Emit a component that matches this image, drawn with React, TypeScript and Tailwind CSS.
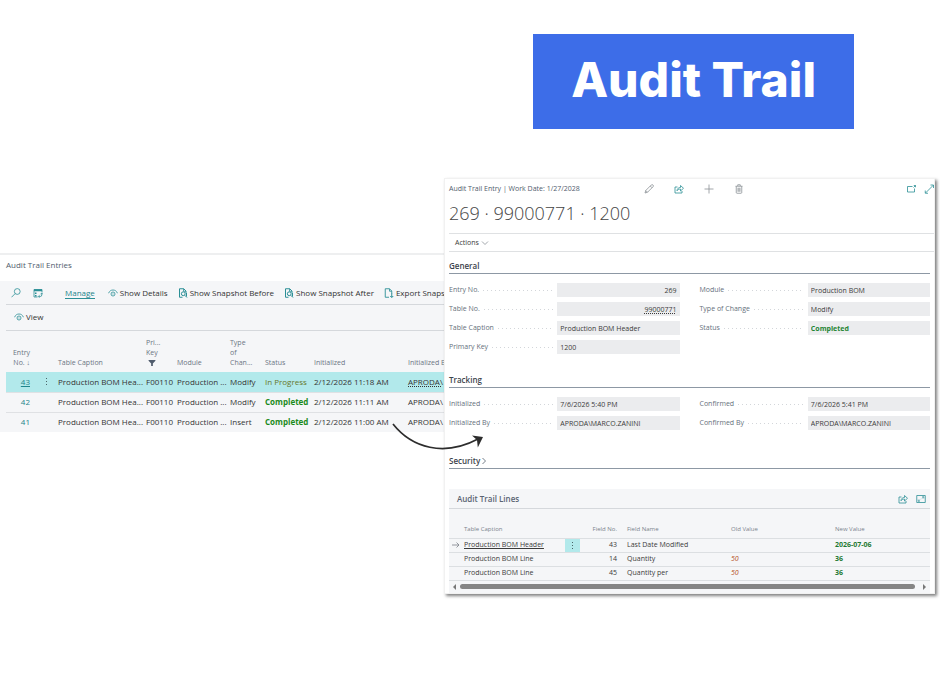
import type { ReactNode } from "react";

interface IconProps {
  className?: string;
}

function Icon({ className = "", children }: IconProps & { children: ReactNode }) {
  return (
    <svg
      viewBox="0 0 20 20"
      fill="none"
      stroke="currentColor"
      strokeWidth="1.6"
      aria-hidden="true"
      className={`size-[10px] shrink-0 ${className}`}
    >
      {children}
    </svg>
  );
}

const SearchIcon = () => (
  <Icon>
    <circle cx="12.5" cy="7" r="5.8" />
    <path d="M8.3 11.2 1 18.5" />
  </Icon>
);

const AnalyzeIcon = () => (
  <Icon>
    <path d="M18 9V3H2v15h7" />
    <path d="M2 4.500h16" strokeWidth="4" />
    <path d="M5.500 9v3M5.500 14v3" strokeWidth="3" />
    <path d="M11 17h3.500a3 3 0 0 0 3-3v-3M13 14.500 10.500 17l2.500 2.500M15 12.500l2.500-2.500 2 2.500" />
  </Icon>
);

const EyeIcon = () => (
  <Icon>
    <path d="M1 10.500C3 6 6 4 10 4s7 2 9 6.500" />
    <circle cx="10" cy="12" r="4" />
    <circle cx="10" cy="12" r="0.600" strokeWidth="1" />
  </Icon>
);

const SnapshotIcon = () => (
  <Icon>
    <path d="M9 18.500H3V1.500h8.500L16 6v4" strokeWidth="2" />
    <path d="M11 1.500V6.500h5" />
    <circle cx="10.500" cy="11.500" r="3.800" strokeWidth="2" />
    <path d="m13.500 14.500 4.500 4.500M17 10v7" strokeWidth="2" />
  </Icon>
);

const ExportIcon = () => (
  <Icon>
    <path d="M10 18.500H2.500V1.500H11L15.500 6v6" strokeWidth="1.800" />
    <path d="M11 1.500V6.500h4.500" />
    <path d="M15.500 11v7.500M12.500 16l3 3 3-3" strokeWidth="2" />
  </Icon>
);

const ShareIcon = () => (
  <Icon>
    <path d="M7 6H2v12h14v-4" />
    <path d="M6 13.500c.5-4.500 3-6.500 7-6.500V3l6 5.500-6 5.500v-3.800c-3 0-5 .8-7 3.300Z" />
  </Icon>
);

const PencilIcon = () => (
  <Icon>
    <path d="m2 18 1.500-5L14.500 2a2 2 0 0 1 3.500 3.500L7 16.500 2 18ZM12.500 4l3.500 3.500M3.500 13l3.500 3.500" />
  </Icon>
);

const PlusIcon = () => (
  <Icon>
    <path d="M10 1v18M1 10h18" />
  </Icon>
);

const TrashIcon = () => (
  <Icon>
    <path d="M3 4.500h14M7.500 4V1.500h5V4M4.500 4.500V17a1.500 1.500 0 0 0 1.500 1.500h8a1.500 1.500 0 0 0 1.500-1.500V4.500M8 7.500v8M10 7.500v8M12 7.500v8" />
  </Icon>
);

const PopoutIcon = () => (
  <Icon>
    <path d="M13 5H3v11h14V9" />
    <path d="m15 7 4-4M15.500 3H19v3.500" />
  </Icon>
);

const ResizeIcon = () => (
  <Icon>
    <path d="M3 18 18.500 2.500M13 2h6v6M2.500 13v5.500H8" />
  </Icon>
);

const FullscreenIcon = () => (
  <Icon>
    <path d="M1.500 3h17v14h-17z" />
    <path d="M11.500 9l4-3.500M12 5.500h3.500V9M8.500 11l-4 3.500M4.500 11v3.500H8" strokeWidth="1.200" />
  </Icon>
);

const FilterIcon = () => (
  <svg viewBox="0 0 8 7" aria-hidden="true" className="h-[6px] w-2">
    <path d="M0 0h8v1L5 4v3H3V4L0 1z" fill="#505c6d" />
  </svg>
);

const MoreDots = () => (
  <svg viewBox="0 0 2 9" aria-hidden="true" className="h-[9px] w-[2px]">
    <path d="M0 1h1v1H0zM0 4h1v1H0zM0 7h1v1H0z" fill="#4a6468" />
  </svg>
);

const entries = [
  { no: 43, type: "Modify", status: "In Progress", initialized: "2/12/2026 11:18 AM" },
  { no: 42, type: "Modify", status: "Completed", initialized: "2/12/2026 11:11 AM" },
  { no: 41, type: "Insert", status: "Completed", initialized: "2/12/2026 11:00 AM" },
];

const lines = [
  { caption: "Production BOM Header", no: 43, name: "Last Date Modified", oldValue: "", newValue: "2026-07-06" },
  { caption: "Production BOM Line", no: 14, name: "Quantity", oldValue: "50", newValue: "36" },
  { caption: "Production BOM Line", no: 45, name: "Quantity per", oldValue: "50", newValue: "36" },
];

function ToolbarButton({ icon, label }: { icon: ReactNode; label: string }) {
  return (
    <button className="flex shrink-0 items-center gap-[2px] whitespace-nowrap text-[#333]">
      <span className="text-[#2b8f96]">{icon}</span>
      {label}
    </button>
  );
}

function EntriesList() {
  return (
    <section className="mt-[75px] min-w-0 overflow-hidden border-t-2 border-[#eeeff0] text-[8px] leading-[10px] text-[#333]">
      <h2 className="flex h-[26px] items-center pb-[6px] pl-[6px] text-[#505c6d]">Audit Trail Entries</h2>
      <div className="bg-[#f5f6f8] pl-[6px]">
        <div className="flex h-6 items-center border-b border-[#d5d8dc] pl-[5px]">
          <button aria-label="Search" className="text-[#2b8f96]">
            <SearchIcon />
          </button>
          <button aria-label="Analyze" className="ml-3 text-[#2b8f96]">
            <AnalyzeIcon />
          </button>
          <span className="ml-[10px] h-[13px] w-px bg-[#cdd1d5]" />
          <button className="ml-3 border-y border-b-[#2b8f96] border-t-transparent text-[#1f858c]">Manage</button>
          <div className="ml-[13px] flex gap-[10px]">
            <ToolbarButton icon={<EyeIcon />} label="Show Details" />
            <ToolbarButton icon={<SnapshotIcon />} label="Show Snapshot Before" />
            <ToolbarButton icon={<SnapshotIcon />} label="Show Snapshot After" />
            <ToolbarButton icon={<ExportIcon />} label="Export Snaps" />
          </div>
        </div>
        <div className="flex h-[26px] items-center border-b border-[#d5d8dc] pb-px pl-2">
          <ToolbarButton icon={<EyeIcon />} label="View" />
        </div>
        <table className="w-full table-fixed border-collapse whitespace-nowrap text-left">
          <colgroup>
            <col className="w-6" />
            <col className="w-7" />
            <col className="w-[88px]" />
            <col className="w-[31px]" />
            <col className="w-[53px]" />
            <col className="w-[35px]" />
            <col className="w-[49px]" />
            <col className="w-[94px]" />
            <col />
          </colgroup>
          <thead className="text-[7px] text-[#6b7583]">
            <tr className="h-[41px] align-bottom [&>th]:p-0 [&>th]:pb-1 [&>th]:font-normal">
              <th className="text-right">
                Entry
                <br />
                No. ↓
              </th>
              <th aria-label="Row menu" />
              <th>Table Caption</th>
              <th>
                Pri...
                <br />
                Key
                <br />
                <span className="flex h-[10px] items-center pl-[2px]">
                  <FilterIcon />
                </span>
              </th>
              <th>Module</th>
              <th>
                Type
                <br />
                of
                <br />
                Chan...
              </th>
              <th>Status</th>
              <th>Initialized</th>
              <th>Initialized By</th>
            </tr>
          </thead>
          <tbody>
            {entries.map((entry, i) => (
              <tr
                key={entry.no}
                className={`h-5 [&>td]:p-0 ${i === 0 ? "bg-[#b2e9eb]" : "border-t border-[#dfe1e4]"}`}
              >
                <td className="text-right">
                  <a href="#entry" className={`text-[#1f858c] ${i === 0 ? "underline" : ""}`}>
                    {entry.no}
                  </a>
                </td>
                <td>
                  {i === 0 && (
                    <button aria-label="More options" className="ml-4 flex">
                      <MoreDots />
                    </button>
                  )}
                </td>
                <td>Production BOM Hea...</td>
                <td>F00110</td>
                <td>Production ...</td>
                <td>{entry.type}</td>
                <td className={entry.status === "Completed" ? "font-bold text-[#1c8a1c]" : "text-[#66782a]"}>
                  {entry.status}
                </td>
                <td>{entry.initialized}</td>
                <td className={i === 0 ? "underline decoration-dotted" : ""}>APRODA\</td>
              </tr>
            ))}
          </tbody>
        </table>
      </div>
    </section>
  );
}

interface FieldProps {
  id: string;
  label: string;
  value: string;
  className?: string;
}

function Field({ id, label, value, className = "" }: FieldProps) {
  return (
    <div className="flex h-[14px] items-center">
      <div className="flex min-w-0 flex-1 items-center gap-1 pr-1">
        <label htmlFor={id} className="whitespace-nowrap text-[#66707c]">
          {label}
        </label>
        <span className="h-px flex-1 bg-[repeating-linear-gradient(90deg,#d3d6da_0_1px,transparent_1px_4px)]" />
      </div>
      <input
        id={id}
        readOnly
        value={value}
        className={`h-full w-[53%] bg-[#ebecee] px-[3px] outline-none ${className}`}
      />
    </div>
  );
}

function SectionTitle({ children }: { children: ReactNode }) {
  return (
    <h3 className="flex h-4 items-center border-b border-[#8d98a4] text-[8px] font-semibold text-[#3c434c]">
      {children}
    </h3>
  );
}

function EntryCard() {
  return (
    <section className="relative mr-[5px] min-w-0 border border-[#f1f1f1] bg-white pl-1 text-[7px] leading-[10px] text-[#3b3b3b] shadow-[2px_2px_3px_0_rgba(0,0,0,0.5)]">
      <header className="flex h-5 items-center text-[#8a9096]">
        <span className="w-[195px] text-[#505c6d]">Audit Trail Entry | Work Date: 1/27/2028</span>
        <div className="flex flex-1 gap-5">
          <button aria-label="Edit">
            <PencilIcon />
          </button>
          <button aria-label="Share" className="text-[#2b8f96]">
            <ShareIcon />
          </button>
          <button aria-label="New">
            <PlusIcon />
          </button>
          <button aria-label="Delete">
            <TrashIcon />
          </button>
        </div>
        <div className="flex gap-2 text-[#2b8f96]">
          <button aria-label="Open in new window">
            <PopoutIcon />
          </button>
          <button aria-label="Expand">
            <ResizeIcon />
          </button>
        </div>
      </header>
      <h2 className="flex h-[34px] items-center pb-[6px] text-[18px] font-light leading-6 text-[#444]">
        269 · 99000771 · 1200
      </h2>
      <div className="flex h-[19px] items-center border-y border-[#dfe1e3] pl-[6px]">
        <button className="flex items-center gap-[2px]">
          Actions
          <svg viewBox="0 0 8 8" fill="none" stroke="#8a9097" aria-hidden="true" className="size-2">
            <path d="m1 2.500 3 3 3-3" strokeWidth="0.800" />
          </svg>
        </button>
      </div>

      <div className="mr-1">
        <div className="mt-[6px]">
          <SectionTitle>General</SectionTitle>
          <div className="mt-[9px] grid grid-cols-2 gap-x-5">
            <div className="flex flex-col gap-[5px]">
              <Field id="entry-no" label="Entry No." value="269" className="text-right" />
              <Field
                id="table-no"
                label="Table No."
                value="99000771"
                className="text-right underline decoration-dotted"
              />
              <Field id="table-caption" label="Table Caption" value="Production BOM Header" />
              <Field id="primary-key" label="Primary Key" value="1200" />
            </div>
            <div className="flex flex-col gap-[5px]">
              <Field id="module" label="Module" value="Production BOM" />
              <Field id="change-type" label="Type of Change" value="Modify" />
              <Field id="status" label="Status" value="Completed" className="font-bold text-[#1f8533]" />
            </div>
          </div>
        </div>

        <div className="mt-[18px]">
          <SectionTitle>Tracking</SectionTitle>
          <div className="mt-[9px] grid grid-cols-2 gap-x-5 gap-y-[5px]">
            <Field id="initialized" label="Initialized" value="7/6/2026 5:40 PM" />
            <Field id="confirmed" label="Confirmed" value="7/6/2026 5:41 PM" />
            <Field id="initialized-by" label="Initialized By" value="APRODA\MARCO.ZANINI" />
            <Field id="confirmed-by" label="Confirmed By" value="APRODA\MARCO.ZANINI" />
          </div>
        </div>

        <div className="mt-[23px]">
          <SectionTitle>
            Security
            <svg viewBox="0 0 6 8" fill="none" stroke="#66707c" aria-hidden="true" className="ml-px h-2 w-[6px]">
              <path d="m1.500 1 3 3-3 3" strokeWidth="0.900" />
            </svg>
          </SectionTitle>
        </div>

        <div className="mt-5 bg-[#f5f6f8]">
          <div className="flex h-5 items-center border-b border-[#d5d8dc] px-2">
            <h3 className="flex-1 text-[8px] font-semibold text-[#5a6472]">Audit Trail Lines</h3>
            <div className="-mr-1 flex gap-2 text-[#2b8f96]">
              <button aria-label="Share lines">
                <ShareIcon />
              </button>
              <button aria-label="Full screen">
                <FullscreenIcon />
              </button>
            </div>
          </div>
          <table className="w-full table-fixed border-collapse whitespace-nowrap text-left">
            <colgroup>
              <col className="w-[15px]" />
              <col className="w-[101px]" />
              <col className="w-[15px]" />
              <col className="w-[37px]" />
              <col className="w-[114px]" />
              <col className="w-[104px]" />
              <col />
            </colgroup>
            <thead className="text-[6px] text-[#7a828c]">
              <tr className="h-[29px] align-bottom [&>th]:p-0 [&>th]:pb-1 [&>th]:font-normal">
                <th aria-label="Current row" />
                <th>Table Caption</th>
                <th aria-label="Row menu" />
                <th className="text-right">Field No.</th>
                <th className="!pl-[10px]">Field Name</th>
                <th>Old Value</th>
                <th>New Value</th>
              </tr>
            </thead>
            <tbody>
              {lines.map((line, i) => (
                <tr key={line.no} className="h-[14px] border-y border-[#dcdfe2] [&>td]:p-0">
                  <td>
                    {i === 0 && (
                      <svg viewBox="0 0 8 6" fill="none" stroke="#7c8288" aria-hidden="true" className="ml-[3px] h-[6px] w-2">
                        <path d="M0 3h7M4.500.5 7 3 4.500 5.500" strokeWidth="0.800" />
                      </svg>
                    )}
                  </td>
                  <td className={i === 0 ? "underline" : ""}>{line.caption}</td>
                  <td className={i === 0 ? "bg-[#b2e9eb]" : ""}>
                    {i === 0 && (
                      <button aria-label="Line options" className="mx-auto flex">
                        <MoreDots />
                      </button>
                    )}
                  </td>
                  <td className="text-right">{line.no}</td>
                  <td className="!pl-[10px]">{line.name}</td>
                  <td className="italic text-[#b5501c]">{line.oldValue}</td>
                  <td className="font-bold text-[#1f7a33]">{line.newValue}</td>
                </tr>
              ))}
            </tbody>
          </table>
          <div className="flex h-3 items-center gap-1 px-1">
            <svg viewBox="0 0 3 6" aria-hidden="true" className="h-[6px] w-[3px]">
              <path d="M3 0v6L0 3z" fill="#777" />
            </svg>
            <div className="mr-1 h-[5px] flex-1 rounded-full bg-[#858585]" />
            <svg viewBox="0 0 3 6" aria-hidden="true" className="h-[6px] w-[3px]">
              <path d="M0 0v6l3-3z" fill="#777" />
            </svg>
          </div>
        </div>
      </div>

      {/* Arrow from the list row to the opened entry */}
      <svg
        viewBox="0 0 96 34"
        aria-hidden="true"
        className="pointer-events-none absolute left-[-54px] top-[241px] h-[34px] w-24"
      >
        <path d="M2 4C21 28 53 37 87 19" fill="none" stroke="#2d2d2d" strokeWidth="1.700" />
        <path d="M92 17 81 15.500l5 4.500.8 7.500z" fill="#2d2d2d" />
      </svg>
    </section>
  );
}

export default function App() {
  return (
    <main className="min-h-screen overflow-hidden bg-white font-['Open_Sans','Noto_Sans',sans-serif]">
      <div className="flex justify-end pr-[86px] pt-[34px]">
        <h1 className="bg-[#3d6de8] px-[38px] pb-[22px] pt-[18px] font-[Inter,sans-serif] text-[48px] font-extrabold leading-[55px] text-white">
          Audit Trail
        </h1>
      </div>
      <div className="mt-[49px] grid grid-cols-[444fr_496fr] items-start">
        <EntriesList />
        <EntryCard />
      </div>
    </main>
  );
}
